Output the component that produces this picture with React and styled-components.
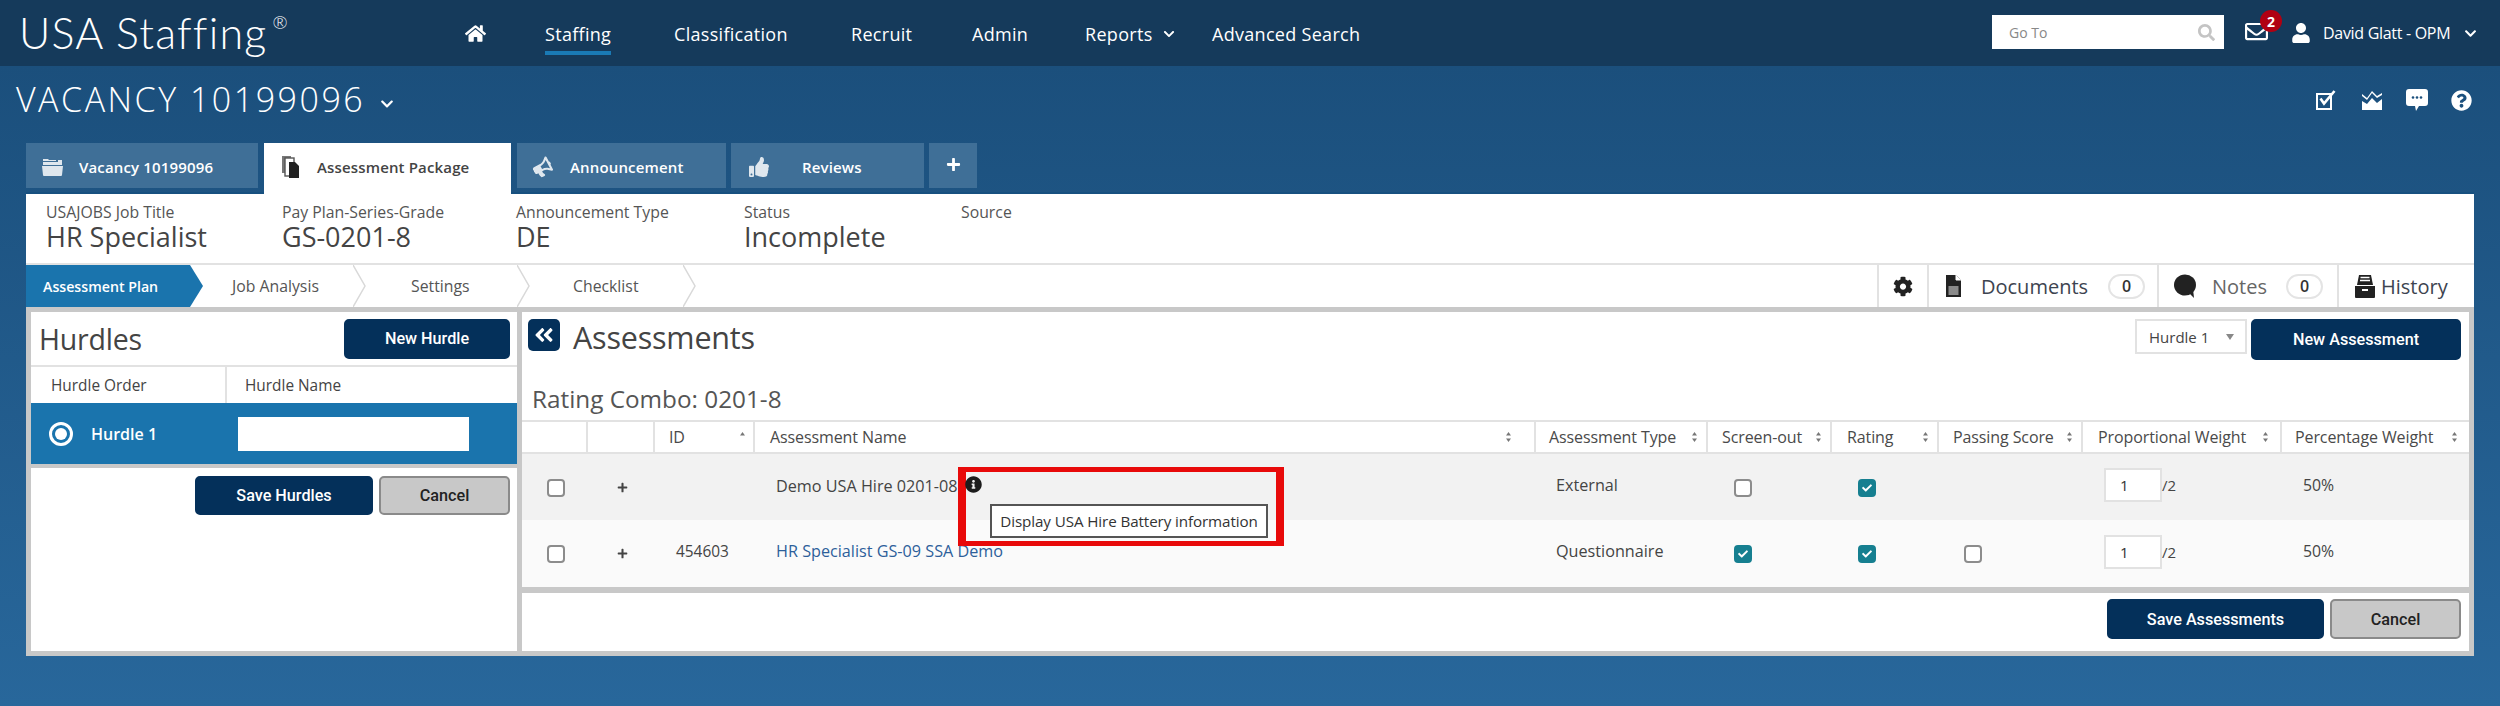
import React from "react";
import styled, { createGlobalStyle } from "styled-components";
import {
  FaHome, FaSearch, FaUser, FaRegEnvelope, FaChevronDown, FaQuestionCircle,
  FaBullhorn, FaThumbsUp, FaPlus, FaCog, FaAngleDoubleLeft, FaInfoCircle, FaCheck,
} from "react-icons/fa";

const UI = `"Open Sans", "Noto Sans", "Liberation Sans", sans-serif`;
const BTN = `Roboto, "Liberation Sans", sans-serif`;
const NAVY = "#04305a";
const BLUE = "#1a74ad";
const GREY = "#c8c8c8";
const LINE = "#e2e2e2";
const TEXT = "#3c3c3c";

const Global = createGlobalStyle`
  html, body { margin: 0; padding: 0; background: #28679b; }
  * { box-sizing: border-box; }
`;

const Page = styled.div`
  width: 2500px;
  height: 706px;
  overflow: hidden;
  font-family: ${UI};
  color: ${TEXT};
  background: linear-gradient(180deg, #1b4f7c 66px, #28679b 100%);
`;

const TopBar = styled.header`
  height: 66px;
  background: #153a5b;
  display: grid;
  grid-template-columns: 466px 1526px 1fr;
  align-items: center;
  color: #fff;
`;
const Logo = styled.div`
  padding-left: 19px;
  font-family: Lato, ${UI};
  font-weight: 300;
  font-size: 43px;
  letter-spacing: 1.2px;
  line-height: 66px;
  white-space: nowrap;
  sup { font-size: 18px; position: relative; top: -5px; vertical-align: super; line-height: 0; letter-spacing: 0; margin-left: 5px; }
`;
const Nav = styled.nav`
  display: grid;
  grid-template-columns: 79px 129px 177px 121px 113px 127px auto;
  align-items: center;
  font-size: 18px;
  font-weight: 500;
`;
const NavLink = styled.span`
  display: inline-flex;
  align-items: center;
  justify-self: start;
  gap: 10px;
  height: 34px;
  white-space: nowrap;
  letter-spacing: 0.3px;
  border-bottom: ${(p) => (p.$active ? "4px solid #1a7ab5" : "4px solid transparent")};
  margin-top: 10px;
  padding-bottom: 5px;
`;
const HomeIcon = styled.span`
  display: flex;
  font-size: 21px;
  margin-left: -1px;
`;
const UserArea = styled.div`
  display: grid;
  grid-template-columns: 253px 46px 32px 141px 14px;
  align-items: center;
`;
const GoTo = styled.div`
  width: 232px;
  height: 34px;
  margin-top: -2px;
  background: #fff;
  display: flex;
  align-items: center;
  justify-content: space-between;
  padding: 0 9px 0 17px;
  color: #888;
  font-size: 14px;
  svg { color: #c4c4c4; font-size: 17px; }
`;
const Mail = styled.span`
  position: relative;
  display: flex;
  font-size: 23px;
  margin-top: -3px;
`;
const Badge = styled.span`
  position: absolute;
  left: 15px;
  top: -10px;
  width: 22px;
  height: 22px;
  border-radius: 50%;
  background: #b00012;
  font-size: 14px;
  font-weight: 700;
  display: flex;
  align-items: center;
  justify-content: center;
`;
const UserIcon = styled.span`
  display: flex;
  font-size: 20px;
`;
const UserName = styled.span`
  font-size: 16px;
  font-weight: 500;
  letter-spacing: -0.3px;
  white-space: nowrap;
`;

const SubHeader = styled.div`
  height: 66px;
  margin-bottom: 11px;
  padding: 0 28px 0 16px;
  display: flex;
  align-items: center;
  justify-content: space-between;
  color: #fff;
`;
const Title = styled.div`
  display: flex;
  align-items: center;
  gap: 15px;
  font-size: 34px;
  font-weight: 300;
  letter-spacing: 2.5px;
  svg { font-size: 14px; margin-top: 10px; }
`;
const QuickIcons = styled.div`
  display: grid;
  grid-template-columns: repeat(3, 45px) 21px;
  align-items: center;
  margin-top: 2px;
  svg { display: block; }
`;

const TabRow = styled.div`
  position: relative;
  z-index: 1;
  height: 51px;
  padding-left: 26px;
  display: flex;
  align-items: flex-start;
`;
const Tab = styled.div`
  width: ${(p) => p.$w}px;
  height: ${(p) => (p.$active ? 51 : 45)}px;
  margin-right: ${(p) => p.$gap}px;
  padding: ${(p) => (p.$active ? "0 0 3px" : "3px 0 0")};
  padding-left: ${(p) => p.$pl}px;
  display: flex;
  align-items: center;
  background: ${(p) => (p.$active ? "#fff" : "#3f6f97")};
  color: ${(p) => (p.$active ? "#444" : "#fff")};
  font-size: 15px;
  font-weight: 600;
  letter-spacing: 0.15px;
  white-space: nowrap;
`;
const TabIcon = styled.span`
  width: ${(p) => p.$w}px;
  flex: none;
  display: flex;
  font-size: 20px;
  color: #dfe7ee;
`;
const Horn = styled(FaBullhorn)`
  transform: rotate(-28deg);
  font-size: 19px;
`;
const PlusTab = styled(Tab)`
  justify-content: center;
  font-size: 15px;
  padding: 0 0 2px 0;
`;
const Card = styled.main`
  margin: 0 26px;
  height: 462px;
  background: #fff;
  box-shadow: 0 -2px 0 #17507f;
`;
const InfoBar = styled.div`
  height: 71px;
  padding: 8px 0 0 20px;
  display: grid;
  grid-template-columns: 236px 234px 228px 217px 1fr;
  border-bottom: 2px solid ${LINE};
`;
const Label = styled.div`
  font-size: 15.8px;
  line-height: 20px;
  color: #555;
  white-space: nowrap;
`;
const Value = styled.div`
  font-size: 27px;
  line-height: 34px;
  margin-top: -2px;
  color: #444;
  white-space: nowrap;
`;
const StepBar = styled.div`
  height: 42px;
  display: flex;
  justify-content: space-between;
`;
const Steps = styled.div`
  display: flex;
`;
const ActiveStep = styled.div`
  width: 177px;
  padding-left: 17px;
  display: flex;
  align-items: center;
  background: ${BLUE};
  clip-path: polygon(0 0, 164px 0, 177px 21px, 164px 42px, 0 42px);
  color: #fff;
  font-size: 14.2px;
  font-weight: 600;
  white-space: nowrap;
`;
const Step = styled.div`
  width: ${(p) => p.$w}px;
  padding-left: ${(p) => p.$pl}px;
  display: flex;
  align-items: center;
  justify-content: space-between;
  font-size: 15.8px;
  font-weight: 500;
  color: #555;
  white-space: nowrap;
  svg { flex: none; }
`;
const Tools = styled.div`
  display: grid;
  grid-template-columns: 50px 230px 180px 137px;
`;
const Tool = styled.div`
  border-left: 2px solid ${LINE};
  padding-left: ${(p) => p.$pl}px;
  display: flex;
  align-items: center;
  color: #222;
`;
const ToolIcon = styled.span`
  width: ${(p) => p.$w}px;
  flex: none;
  display: flex;
  font-size: 21px;
`;
const ToolLabel = styled.span`
  width: ${(p) => p.$w}px;
  flex: none;
  font-size: 20px;
  color: ${(p) => p.$color || "#3d4450"};
  white-space: nowrap;
`;
const Count = styled.span`
  width: 37px;
  height: 25px;
  border: 2px solid #e4e4e4;
  border-radius: 13px;
  display: flex;
  align-items: center;
  justify-content: center;
  font-size: 16px;
  font-weight: 600;
  color: #333;
`;
const Work = styled.div`
  height: 349px;
  padding: 5px;
  background: ${GREY};
  display: grid;
  grid-template-columns: 486px 1947px;
  column-gap: 5px;
`;
const Panel = styled.section`
  background: #fff;
  position: relative;
`;
const HurdleHead = styled.div`
  height: 55px;
  padding: 0 7px 0 8px;
  display: flex;
  align-items: center;
  justify-content: space-between;
  border-bottom: 2px solid ${LINE};
`;
const Heading = styled.h2`
  margin: 0;
  font-size: ${(p) => p.$size || 30.5}px;
  font-weight: 400;
  color: #444;
  line-height: 40px;
  letter-spacing: -0.2px;
`;
const Button = styled.button`
  width: ${(p) => p.$w}px;
  height: ${(p) => p.$h || 40}px;
  flex: none;
  padding: 0;
  border-radius: 5px;
  border: 2px solid ${(p) => (p.$secondary ? "#8a8a8a" : NAVY)};
  background: ${(p) => (p.$secondary ? GREY : NAVY)};
  color: ${(p) => (p.$secondary ? "#222" : "#fff")};
  font-family: ${BTN};
  font-size: 16.2px;
  font-weight: 500;
`;
const HurdleCols = styled.div`
  height: 36px;
  display: grid;
  grid-template-columns: 194px 1fr;
  font-size: 15.4px;
  font-weight: 500;
  color: #444;
`;
const HurdleCol = styled.div`
  padding-left: ${(p) => p.$pl}px;
  display: flex;
  align-items: center;
  & + & { border-left: 2px solid ${LINE}; }
`;
const HurdleRow = styled.div`
  height: 61px;
  background: ${BLUE};
  display: grid;
  grid-template-columns: 207px 231px;
  align-items: center;
  color: #fff;
`;
const HurdleCell = styled.div`
  padding-left: 18px;
  display: flex;
  align-items: center;
  gap: 18px;
  font-size: 16px;
  font-weight: 600;
`;
const Radio = styled.span`
  width: 24px;
  height: 24px;
  border-radius: 50%;
  border: 3px solid #fff;
  display: flex;
  align-items: center;
  justify-content: center;
  &::after { content: ""; width: 12px; height: 12px; border-radius: 50%; background: #fff; }
`;
const TextBox = styled.div`
  width: ${(p) => p.$w}px;
  height: 34px;
  background: #fff;
  color: #333;
  border: ${(p) => (p.$border ? `2px solid ${LINE}` : "none")};
`;
const HurdleActions = styled.div`
  border-top: 4px solid ${GREY};
  padding: 8px 7px 0 0;
  display: flex;
  justify-content: flex-end;
  gap: 6px;
`;
const AssessHead = styled.div`
  height: 66px;
  padding: 7px 8px 0 6px;
  display: flex;
  align-items: flex-start;
`;
const Collapse = styled.span`
  width: 32px;
  height: 32px;
  flex: none;
  background: ${NAVY};
  border-radius: 5px;
  color: #fff;
  display: flex;
  align-items: center;
  justify-content: center;
  font-size: 22px;
  margin-right: 13px;
`;
const AssessTitle = styled(Heading)`
  flex: 1;
  margin-top: -2px;
`;
const Select = styled.div`
  width: 112px;
  height: 35px;
  margin-right: 4px;
  border: 2px solid ${LINE};
  padding: 0 11px 0 12px;
  display: flex;
  align-items: center;
  justify-content: space-between;
  font-size: 15px;
  color: #444;
  &::after { content: ""; border: 4px solid transparent; border-top: 6px solid #888; border-bottom: 0; }
`;
const RatingCombo = styled.div`
  height: 42px;
  padding: 0 0 2px 10px;
  display: flex;
  align-items: center;
  font-size: 24.3px;
  color: #555;
  white-space: nowrap;
`;
const COLS = "66px 67px 100px 781px 172px 124px 107px 144px 199px 187px";
const THead = styled.div`
  height: 34px;
  display: grid;
  grid-template-columns: ${COLS};
  border-top: 2px solid ${LINE};
  border-bottom: 2px solid ${LINE};
`;
const Th = styled.div`
  padding: 0 ${(p) => p.$pr}px 0 ${(p) => p.$pl}px;
  display: flex;
  align-items: center;
  justify-content: space-between;
  font-size: 16px;
  font-weight: 500;
  color: #4a4a4a;
  white-space: nowrap;
  letter-spacing: -0.1px;
  &:not(:last-child) { border-right: 2px solid ${LINE}; }
`;
const Tr = styled.div`
  position: relative;
  z-index: ${(p) => p.$z || 0};
  height: ${(p) => p.$h}px;
  display: grid;
  grid-template-columns: ${COLS};
  background: ${(p) => p.$bg};
`;
const Td = styled.div`
  position: relative;
  padding-left: ${(p) => p.$pl}px;
  padding-bottom: ${(p) => p.$pb ?? 0}px;
  display: flex;
  align-items: center;
  font-size: ${(p) => p.$fs || 16.2}px;
  font-weight: 500;
  color: #444;
  white-space: nowrap;
`;
const Check = styled.span`
  width: 18px;
  height: 18px;
  border-radius: 4px;
  margin-top: 1px;
  border: 2px solid ${(p) => (p.$on ? "#167f90" : "#8c8c8c")};
  background: ${(p) => (p.$on ? "#167f90" : "#fff")};
  color: #fff;
  font-size: 10px;
  display: flex;
  align-items: center;
  justify-content: center;
`;
const Plus = styled.span`
  display: flex;
  font-size: 11px;
  color: #444;
`;
const RowLink = styled.span`
  color: #2d5f9a;
`;
const InfoDot = styled.span`
  position: relative;
  z-index: 3;
  display: flex;
  margin: -4px 0 0 7px;
  font-size: 17px;
  color: #1c1c1c;
`;
const Callout = styled.div`
  position: absolute;
  left: 203px;
  top: 13px;
  width: 326px;
  height: 79px;
  border: solid #e80a0a;
  border-width: 5px 8px;
  padding: 32px 0 0 24px;
`;
const Tooltip = styled.div`
  width: 278px;
  height: 34px;
  background: #fff;
  border: 2px solid #555;
  display: flex;
  align-items: center;
  justify-content: center;
  font-size: 15.2px;
  font-weight: 400;
  color: #333;
  letter-spacing: -0.1px;
`;
const Slash = styled.span`
  font-size: 15px;
`;
const AssessActions = styled.div`
  border-top: 6px solid ${GREY};
  padding: 6px 8px 0 0;
  display: flex;
  justify-content: flex-end;
  gap: 6px;
`;
const WeightBox = styled(TextBox)`
  width: 58px;
  padding-left: 14px;
  display: flex;
  align-items: center;
  font-size: 15px;
`;

const Sort = ({ up }) => (
  <svg width="7" height="12" viewBox="0 0 7 12" fill="#777">
    <path d="M3.5 1 L6 4.5 H1 Z" />
    {!up && <path d="M3.5 11 L6 7.5 H1 Z" />}
  </svg>
);
const StepChevron = () => (
  <svg width="13" height="42" viewBox="0 0 13 42" fill="none" stroke="#d9d9d9" strokeWidth="1.5">
    <path d="M0 0 L12 21 L0 42" />
  </svg>
);
const Folder = () => (
  <svg width="21" height="18" viewBox="0 0 21 18" fill="#dfe7ee">
    <path d="M1 1h5l1 1h7v1H1zM16 2h4v2h-4zM1 4h19v3H1z" />
    <path d="M0 8h21l-1 9a1 1 0 0 1-1 1H2a1 1 0 0 1-1-1z" />
  </svg>
);
const Docs = () => (
  <svg width="20" height="24" viewBox="0 0 20 24">
    <rect x="1" y="1" width="9" height="17" fill="#777" />
    <rect x="4" y="3" width="9" height="18" fill="#fff" stroke="#555" strokeWidth="1.4" />
    <path d="M8 7h6l4 4v12H8z" fill="#222" />
  </svg>
);
const CheckBoxIcon = () => (
  <svg width="21" height="20" viewBox="0 0 21 20" fill="none">
    <path d="M1 4h14v15H1z" stroke="#fff" strokeWidth="2" />
    <path d="M4.5 8.5l3.5 5L18.5 1" stroke="#fff" strokeWidth="2.6" />
  </svg>
);
const ZigMail = () => (
  <svg width="22" height="20" viewBox="0 0 22 20" fill="#fff">
    <path d="M1 4l5 4 5-7 5 5 5-3v2l-5 3-5-5-5 7-5-4z" />
    <path d="M1 11l5 3 5-6 5 5 5-4v12H1z" />
  </svg>
);
const Bubble = () => (
  <svg width="22" height="22" viewBox="0 0 22 22">
    <path d="M3 0h16a3 3 0 0 1 3 3v11a3 3 0 0 1-3 3h-6l-3 5-1-5H3a3 3 0 0 1-3-3V3a3 3 0 0 1 3-3z" fill="#fff" />
    <circle cx="7" cy="8.5" r="1.3" fill="#1b4f7c" />
    <circle cx="11" cy="8.5" r="1.3" fill="#1b4f7c" />
    <circle cx="15" cy="8.5" r="1.3" fill="#1b4f7c" />
  </svg>
);
const FileIcon = () => (
  <svg width="17" height="24" viewBox="0 0 17 24">
    <path d="M1 1h10l5 5v17H1z" fill="#222" />
    <path d="M11 1v5h5" fill="#fff" stroke="#fff" />
    <rect x="3.5" y="12" width="10" height="9" fill="#8a8a8a" />
  </svg>
);
const NoteBubble = () => (
  <svg width="22" height="24" viewBox="0 0 22 24" fill="#222">
    <ellipse cx="11" cy="11" rx="11" ry="10.5" />
    <path d="M14 18l6 6-1-9z" />
  </svg>
);
const Drawer = () => (
  <svg width="20" height="24" viewBox="0 0 20 24" fill="#222">
    <path d="M4 1h12l2 10H2z" />
    <path d="M5.5 3.5h9M5 6.5h10" stroke="#fff" strokeWidth="1.3" />
    <path d="M0 12h20v11a1 1 0 0 1-1 1H1a1 1 0 0 1-1-1z" />
    <rect x="7" y="15" width="6" height="2" fill="#fff" />
  </svg>
);

const headers = [
  { label: "", pl: 14, pr: 10, sort: null },
  { label: "", pl: 14, pr: 10, sort: null },
  { label: "ID", pl: 14, pr: 7, sort: "up" },
  { label: "Assessment Name", pl: 15, pr: 22, sort: "both" },
  { label: "Assessment Type", pl: 13, pr: 8, sort: "both" },
  { label: "Screen-out", pl: 14, pr: 8, sort: "both" },
  { label: "Rating", pl: 15, pr: 8, sort: "both" },
  { label: "Passing Score", pl: 14, pr: 8, sort: "both" },
  { label: "Proportional Weight", pl: 15, pr: 11, sort: "both" },
  { label: "Percentage Weight", pl: 13, pr: 11, sort: "both" },
];

export default function App() {
  return (
    <Page>
      <Global />
      <TopBar>
        <Logo>USA Staffing<sup>®</sup></Logo>
        <Nav>
          <HomeIcon><FaHome /></HomeIcon>
          <NavLink $active>Staffing</NavLink>
          <NavLink>Classification</NavLink>
          <NavLink>Recruit</NavLink>
          <NavLink>Admin</NavLink>
          <NavLink>Reports <FaChevronDown size={12} /></NavLink>
          <NavLink>Advanced Search</NavLink>
        </Nav>
        <UserArea>
          <GoTo>Go To <FaSearch /></GoTo>
          <Mail><FaRegEnvelope /><Badge>2</Badge></Mail>
          <UserIcon><FaUser /></UserIcon>
          <UserName>David Glatt - OPM</UserName>
          <FaChevronDown size={13} />
        </UserArea>
      </TopBar>

      <SubHeader>
        <Title>VACANCY 10199096 <FaChevronDown /></Title>
        <QuickIcons>
          <CheckBoxIcon />
          <ZigMail />
          <Bubble />
          <FaQuestionCircle size={21} />
        </QuickIcons>
      </SubHeader>

      <TabRow>
        <Tab $w={232} $gap={6} $pl={16}><TabIcon $w={37}><Folder /></TabIcon>Vacancy 10199096</Tab>
        <Tab $w={247} $gap={6} $pl={17} $active><TabIcon $w={36}><Docs /></TabIcon>Assessment Package</Tab>
        <Tab $w={209} $gap={5} $pl={16}><TabIcon $w={37}><Horn /></TabIcon>Announcement</Tab>
        <Tab $w={193} $gap={5} $pl={18}><TabIcon $w={53}><FaThumbsUp /></TabIcon>Reviews</Tab>
        <PlusTab $w={48} $gap={0}><FaPlus /></PlusTab>
      </TabRow>

      <Card>
        <InfoBar>
          <div><Label>USAJOBS Job Title</Label><Value>HR Specialist</Value></div>
          <div><Label>Pay Plan-Series-Grade</Label><Value>GS-0201-8</Value></div>
          <div><Label>Announcement Type</Label><Value>DE</Value></div>
          <div><Label>Status</Label><Value>Incomplete</Value></div>
          <div><Label>Source</Label></div>
        </InfoBar>

        <StepBar>
          <Steps>
            <ActiveStep>Assessment Plan</ActiveStep>
            <Step $w={163} $pl={29}>Job Analysis<StepChevron /></Step>
            <Step $w={164} $pl={45}>Settings<StepChevron /></Step>
            <Step $w={166} $pl={43}>Checklist<StepChevron /></Step>
          </Steps>
          <Tools>
            <Tool $pl={14}><ToolIcon $w={20}><FaCog /></ToolIcon></Tool>
            <Tool $pl={16}>
              <ToolIcon $w={36}><FileIcon /></ToolIcon>
              <ToolLabel $w={127}>Documents</ToolLabel>
              <Count>0</Count>
            </Tool>
            <Tool $pl={15}>
              <ToolIcon $w={38}><NoteBubble /></ToolIcon>
              <ToolLabel $w={74} $color="#666">Notes</ToolLabel>
              <Count>0</Count>
            </Tool>
            <Tool $pl={16}>
              <ToolIcon $w={26}><Drawer /></ToolIcon>
              <ToolLabel $w={80}>History</ToolLabel>
            </Tool>
          </Tools>
        </StepBar>

        <Work>
          <Panel>
            <HurdleHead>
              <Heading $size={28.5}>Hurdles</Heading>
              <Button $w={166}>New Hurdle</Button>
            </HurdleHead>
            <HurdleCols>
              <HurdleCol $pl={20}>Hurdle Order</HurdleCol>
              <HurdleCol $pl={18}>Hurdle Name</HurdleCol>
            </HurdleCols>
            <HurdleRow>
              <HurdleCell><Radio />Hurdle 1</HurdleCell>
              <TextBox $w={231} />
            </HurdleRow>
            <HurdleActions>
              <Button $w={178} $h={39}>Save Hurdles</Button>
              <Button $w={131} $h={39} $secondary>Cancel</Button>
            </HurdleActions>
          </Panel>

          <Panel>
            <AssessHead>
              <Collapse><FaAngleDoubleLeft /></Collapse>
              <AssessTitle>Assessments</AssessTitle>
              <Select>Hurdle 1</Select>
              <Button $w={210} $h={41}>New Assessment</Button>
            </AssessHead>
            <RatingCombo>Rating Combo: 0201-8</RatingCombo>
            <THead>
              {headers.map((h, i) => (
                <Th key={i} $pl={h.pl} $pr={h.pr}>
                  {h.label}
                  {h.sort && <Sort up={h.sort === "up"} />}
                </Th>
              ))}
            </THead>
            <Tr $h={66} $bg="#f2f2f2" $z={2}>
              <Td $pl={25}><Check /></Td>
              <Td $pl={29}><Plus><FaPlus /></Plus></Td>
              <Td $pl={21} />
              <Td $pl={21} $pb={2}>
                Demo USA Hire 0201-08
                <InfoDot><FaInfoCircle /></InfoDot>
                <Callout><Tooltip>Display USA Hire Battery information</Tooltip></Callout>
              </Td>
              <Td $pl={20} $pb={5}>External</Td>
              <Td $pl={26}><Check /></Td>
              <Td $pl={26}><Check $on><FaCheck /></Check></Td>
              <Td $pl={25} />
              <Td $pl={21} $pb={4}><WeightBox $border>1</WeightBox><Slash>/2</Slash></Td>
              <Td $pl={21} $pb={5} $fs={15.8}>50%</Td>
            </Tr>
            <Tr $h={67} $bg="#fafafa">
              <Td $pl={25}><Check /></Td>
              <Td $pl={29}><Plus><FaPlus /></Plus></Td>
              <Td $pl={21} $pb={5} $fs={15.4}>454603</Td>
              <Td $pl={21} $pb={5}><RowLink>HR Specialist GS-09 SSA Demo</RowLink></Td>
              <Td $pl={20} $pb={5}>Questionnaire</Td>
              <Td $pl={26}><Check $on><FaCheck /></Check></Td>
              <Td $pl={26}><Check $on><FaCheck /></Check></Td>
              <Td $pl={25}><Check /></Td>
              <Td $pl={21} $pb={4}><WeightBox $border>1</WeightBox><Slash>/2</Slash></Td>
              <Td $pl={21} $pb={5} $fs={15.8}>50%</Td>
            </Tr>
            <AssessActions>
              <Button $w={217}>Save Assessments</Button>
              <Button $w={131} $secondary>Cancel</Button>
            </AssessActions>
          </Panel>
        </Work>
      </Card>
    </Page>
  );
}
